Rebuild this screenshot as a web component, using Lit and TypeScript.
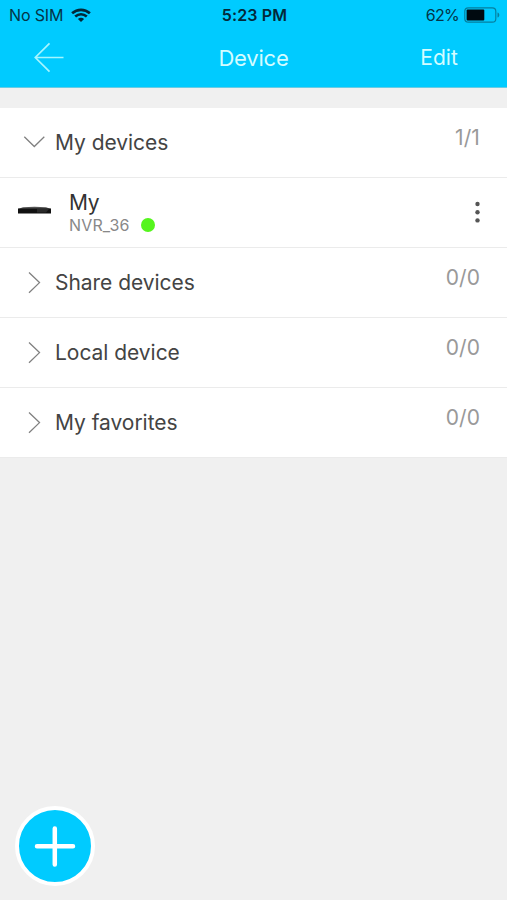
import { LitElement, html, css, svg } from "lit";
import { customElement, property } from "lit/decorators.js";

@customElement("status-bar")
class StatusBar extends LitElement {
  static styles = css`
    :host { display: grid; grid-template-columns: 1fr auto 1fr; height: 30px; padding: 0 7px 0 9px; align-items: center; color: #043447; font-size: 16px; line-height: 30px; }
    .left, .right { display: flex; align-items: center; }
    .right { justify-content: flex-end; }
    .carrier { letter-spacing: -0.15px; }
    .wifi { margin: 0 0 1px 8px; }
    .time { font-weight: 600; color: #03293a; letter-spacing: 0.15px; }
    .percent { letter-spacing: -0.7px; }
    .battery { margin: 0 0 1px 5px; }
    svg { display: block; }
  `;
  render() {
    return html`
      <div class="left">
        <span class="carrier">No SIM</span>
        <svg class="wifi" width="20" height="14" viewBox="0 0 20 14" fill="none" stroke="#032838" stroke-width="2.7">
          <path d="M1.100 5.300C6.300.7 13.700.7 18.900 5.300M4.200 8.500c3.400-2.900 8.200-2.900 11.600 0" />
          <path d="M10 14 6.900 10.900c1.800-1.500 4.400-1.500 6.200 0Z" fill="#032838" stroke="none" />
        </svg>
      </div>
      <span class="time">5:23 PM</span>
      <div class="right">
        <span class="percent">62%</span>
        <svg class="battery" width="36" height="16" viewBox="0 0 36 16">
          <rect x=".8" y=".8" width="31" height="14.400" rx="3.500" fill="none" stroke="#067f9f" stroke-width="1.200" />
          <rect x="2.600" y="2.600" width="17.700" height="10.800" rx="1" fill="#000a10" />
          <path d="M33.500 5.500c2.400.6 2.400 4.400 0 5Z" fill="#067f9f" />
        </svg>
      </div>
    `;
  }
}

@customElement("group-row")
class GroupRow extends LitElement {
  @property() label = "";
  @property() count = "";
  @property({ type: Boolean }) open = false;
  static styles = css`
    :host { display: flex; box-sizing: border-box; height: 70px; padding: 0 27px 1px 22px; background: #fff; border-bottom: 1px solid #ebebeb; align-items: center; }
    .chevron { flex: none; width: 24px; height: 24px; }
    .label { margin: 2px 0 0 9px; flex: 1; font-size: 21px; line-height: 28px; letter-spacing: -0.04px; color: #444; }
    .count { font-size: 21px; line-height: 28px; letter-spacing: 0.1px; color: #999; margin-bottom: 8px; }
  `;
  render() {
    return html`
      <svg class="chevron" viewBox="0 0 24 24" fill="none" stroke="#808080" stroke-width="1.300">
        ${this.open ? svg`<path d="M2.300 6.800 12.300 16.500 22.300 6.800" />` : svg`<path d="M7 2.500 17.500 12.600 7 22.700" />`}
      </svg>
      <span class="label">${this.label}</span>
      <span class="count">${this.count}</span>
    `;
  }
}

@customElement("device-row")
class DeviceRow extends LitElement {
  @property() name = "";
  @property() model = "";
  static styles = css`
    :host { display: flex; box-sizing: border-box; height: 70px; padding: 0 26px 1px 18px; background: #fff; border-bottom: 1px solid #ebebeb; align-items: center; }
    .recorder { flex: none; width: 33px; height: 8px; margin-bottom: 4px; }
    .info { flex: 1; margin-left: 18px; }
    .name { font-size: 21px; line-height: 26px; letter-spacing: -0.4px; color: #333; }
    .detail { display: flex; align-items: center; font-size: 16px; line-height: 18px; color: #888; }
    .model { letter-spacing: 0.15px; }
    .online { width: 14px; height: 14px; margin-left: 11px; border-radius: 50%; background: #55f51d; }
    .more { width: 7px; height: 22px; }
  `;
  render() {
    return html`
      <svg class="recorder" viewBox="0 0 33 8">
        <path d="M0 3 5 1.200Q16.500.3 28 1.200L33 3Z" fill="#555" />
        <path d="M0 2.500H33V7.500H0Z" fill="#111" />
        <path d="M19 3H31L28 6.500H19Z" fill="#2a2a2a" />
      </svg>
      <div class="info">
        <div class="name">${this.name}</div>
        <div class="detail"><span class="model">${this.model}</span><span class="online"></span></div>
      </div>
      <svg class="more" viewBox="0 0 7 22" fill="#555">
        <circle cx="3.500" cy="3" r="2.200" /><circle cx="3.500" cy="11.200" r="2.200" /><circle cx="3.500" cy="19.400" r="2.200" />
      </svg>
    `;
  }
}

@customElement("app-root")
class AppRoot extends LitElement {
  static styles = css`
    :host { display: flex; flex-direction: column; box-sizing: border-box; width: 100%; height: 900px; background: #f0f0f0; font-family: Inter, "Liberation Sans", sans-serif; }
    .header { flex: none; box-sizing: border-box; height: 88px; background: #00cbff; border-bottom: 1px solid #69cce4; }
    .nav { display: grid; grid-template-columns: 1fr auto 1fr; height: 56px; align-items: center; padding: 0 33px; color: #d4fcff; }
    .back { width: 32px; height: 32px; }
    .title { font-size: 22px; line-height: 28px; letter-spacing: -0.2px; }
    .edit { justify-self: end; margin-right: 16px; font-size: 21px; line-height: 28px; letter-spacing: 0.1px; }
    .list { margin-top: 20px; }
    .spacer { flex: 1; }
    .add { box-sizing: border-box; width: 80px; height: 80px; margin: 0 0 14px 14.5px; padding: 0; border: 4px solid #fff; border-radius: 50%; background: #00cbff; }
    .plus { display: block; width: 72px; height: 72px; }
  `;
  render() {
    return html`
      <div class="header">
        <status-bar></status-bar>
        <div class="nav">
          <svg class="back" viewBox="0 0 32 32" fill="none" stroke="#a5f5ff" stroke-width="1.700">
            <path d="M30.500 15.500H2.500M16.500 1.300 2.300 15.500 16.500 29.700" />
          </svg>
          <span class="title">Device</span>
          <span class="edit">Edit</span>
        </div>
      </div>
      <div class="list">
        <group-row label="My devices" count="1/1" open></group-row>
        <device-row name="My" model="NVR_36"></device-row>
        <group-row label="Share devices" count="0/0"></group-row>
        <group-row label="Local device" count="0/0"></group-row>
        <group-row label="My favorites" count="0/0"></group-row>
      </div>
      <div class="spacer"></div>
      <button class="add" aria-label="Add device">
        <svg class="plus" viewBox="0 0 72 72" stroke="#fff" stroke-width="4.500" stroke-linecap="round">
          <path d="M35.800 18.500V54.500M18 36.300H54" />
        </svg>
      </button>
    `;
  }
}
